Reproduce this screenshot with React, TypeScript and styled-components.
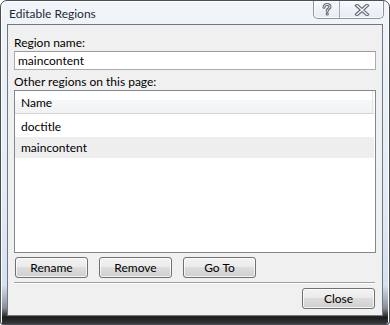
import styled, { createGlobalStyle } from 'styled-components';

const GlobalStyle = createGlobalStyle`
    html, body {
        margin: 0;
        padding: 0;
        background: #ffffff;
    }

    body {
        font-family: 'Segoe UI', Lato, 'Noto Sans', 'Liberation Sans', sans-serif;
        font-size: 12px;
        color: #000;
    }
`;

const regions = ['doctitle', 'maincontent'];

const App: React.FC = () => {
    return (
        <>
            <GlobalStyle />
            <Frame>
                <TitleBar>
                    <Title>Editable Regions</Title>
                    <CaptionGroup>
                        <CaptionButton $width={25} $first>
                            <svg width="12" height="13" viewBox="0 0 12 13">
                                <path
                                    d="M3 4.2 C3 2.2 4.5 1.5 6 1.5 C7.8 1.5 9 2.4 9 3.9 C9 5.6 6.2 5.9 6.2 7.8 L6.2 8.3"
                                    fill="none"
                                    stroke="#5d6673"
                                    strokeWidth="3"
                                    strokeLinecap="round"
                                />
                                <circle cx="6.2" cy="11" r="1.6" fill="#5d6673" />
                                <path
                                    d="M3 4.2 C3 2.2 4.5 1.5 6 1.5 C7.8 1.5 9 2.4 9 3.9 C9 5.6 6.2 5.9 6.2 7.8 L6.2 8.3"
                                    fill="none"
                                    stroke="#f4f6f9"
                                    strokeWidth="1"
                                    strokeLinecap="round"
                                />
                                <circle cx="6.2" cy="11" r="0.6" fill="#f4f6f9" />
                            </svg>
                        </CaptionButton>
                        <CaptionButton $width={43}>
                            <svg width="16" height="12" viewBox="0 0 16 12">
                                <path
                                    d="M3 1.5 L13 10.5 M13 1.5 L3 10.5"
                                    fill="none"
                                    stroke="#5d6673"
                                    strokeWidth="3.6"
                                    strokeLinecap="square"
                                />
                                <path
                                    d="M3 1.5 L13 10.5 M13 1.5 L3 10.5"
                                    fill="none"
                                    stroke="#f4f6f9"
                                    strokeWidth="1.4"
                                    strokeLinecap="square"
                                />
                            </svg>
                        </CaptionButton>
                    </CaptionGroup>
                </TitleBar>
                <Client>
                    <Label>Region name:</Label>
                    <TextInput defaultValue="maincontent" />
                    <Label $top={4}>Other regions on this page:</Label>
                    <ListBox>
                        <Header>
                            <HeaderCell>Name</HeaderCell>
                        </Header>
                        <Rows>
                            {regions.map((r, idx) => (
                                <Row key={r} $selected={idx === 1}>
                                    {r}
                                </Row>
                            ))}
                        </Rows>
                    </ListBox>
                    <ButtonRow>
                        <Button>Rename</Button>
                        <Button>Remove</Button>
                        <Button>Go To</Button>
                    </ButtonRow>
                    <Separator />
                    <Footer>
                        <Button>Close</Button>
                    </Footer>
                </Client>
            </Frame>
        </>
    );
};

export default App;

const Frame = styled.div`
    box-sizing: border-box;
    width: 390px;
    height: 325px;
    display: flex;
    flex-direction: column;
    padding: 0 6px 8px 6px;
    border: 1px solid #4a4f57;
    border-radius: 7px 7px 3px 3px;
    background: linear-gradient(
        to bottom,
        #f1f5fa 0%,
        #e3ebf5 60%,
        #d5e1ef 88%,
        #8a9099 95%,
        #1c1c1c 98%,
        #3a3a3a 100%
    );
    box-shadow: inset 1px 1px 0 #ffffff, inset -1px 0 0 #ffffff;
`;

const TitleBar = styled.div`
    height: 23px;
    display: flex;
    align-items: flex-start;
    justify-content: space-between;
`;

const Title = styled.div`
    padding: 5px 0 0 2px;
    line-height: 16px;
    color: #1f2a36;
`;

const CaptionGroup = styled.div`
    display: flex;
    margin-right: -1px;
    border: 1px solid #8d949e;
    border-top: none;
    border-radius: 0 0 5px 5px;
    overflow: hidden;
    background: linear-gradient(to bottom, #f7f9fc 0%, #e6ecf3 100%);
    box-shadow: inset 0 0 0 1px rgba(255, 255, 255, 0.8);
`;

const CaptionButton = styled.div<{ $width: number; $first?: boolean }>`
    width: ${({ $width }) => $width}px;
    height: 17px;
    display: flex;
    align-items: center;
    justify-content: center;
    border-right: ${({ $first }) => ($first ? '1px solid #a4abb4' : 'none')};
`;

const Client = styled.div`
    flex: 1;
    display: flex;
    flex-direction: column;
    padding: 10px 5px 6px 6px;
    background: #f0f0f0;
    border: 1px solid #6e7884;
`;

const Label = styled.div<{ $top?: number }>`
    margin-top: ${({ $top }) => $top || 0}px;
    line-height: 15px;
    height: 15px;
`;

const TextInput = styled.input`
    box-sizing: border-box;
    margin-top: 1px;
    width: 362px;
    height: 19px;
    padding: 0 3px;
    border: 1px solid #abadb3;
    border-top-color: #9a9ca2;
    background: #ffffff;
    font: inherit;
    color: #000;
    outline: none;
`;

const ListBox = styled.div`
    box-sizing: border-box;
    margin-top: 1px;
    width: 362px;
    height: 163px;
    border: 1px solid #828790;
    background: #ffffff;
    padding-right: 1px;
`;

const Header = styled.div`
    display: flex;
    height: 22px;
    border-bottom: 1px solid #d5d5d5;
    background: linear-gradient(to bottom, #ffffff 0%, #ffffff 42%, #f6f7f8 43%, #f1f2f4 100%);
`;

const HeaderCell = styled.div`
    box-sizing: border-box;
    width: 358px;
    padding: 4px 0 0 6px;
    line-height: 16px;
    border-right: 1px solid #e3e5e8;
`;

const Rows = styled.div`
    padding-top: 2px;
`;

const Row = styled.div<{ $selected?: boolean }>`
    height: 21px;
    line-height: 21px;
    padding-left: 6px;
    background: ${({ $selected }) => ($selected ? '#eeeeee' : 'transparent')};
`;

const ButtonRow = styled.div`
    display: flex;
    gap: 11px;
    margin-top: 4px;
    padding-left: 1px;
`;

const Button = styled.button`
    box-sizing: border-box;
    width: 73px;
    height: 21px;
    padding: 0;
    border: 1px solid #707070;
    border-radius: 3px;
    background: linear-gradient(to bottom, #f2f2f2 0%, #ebebeb 45%, #dddddd 50%, #cfcfcf 100%);
    box-shadow: inset 0 0 0 1px rgba(255, 255, 255, 0.75);
    font: inherit;
    color: #000;
    line-height: 17px;
`;

const Separator = styled.div`
    margin-top: 4px;
    width: 361px;
    height: 1px;
    background: #a0a0a0;
    box-shadow: 0 1px 0 #ffffff;
`;

const Footer = styled.div`
    display: flex;
    justify-content: flex-end;
    margin-top: 5px;
    width: 361px;
`;
